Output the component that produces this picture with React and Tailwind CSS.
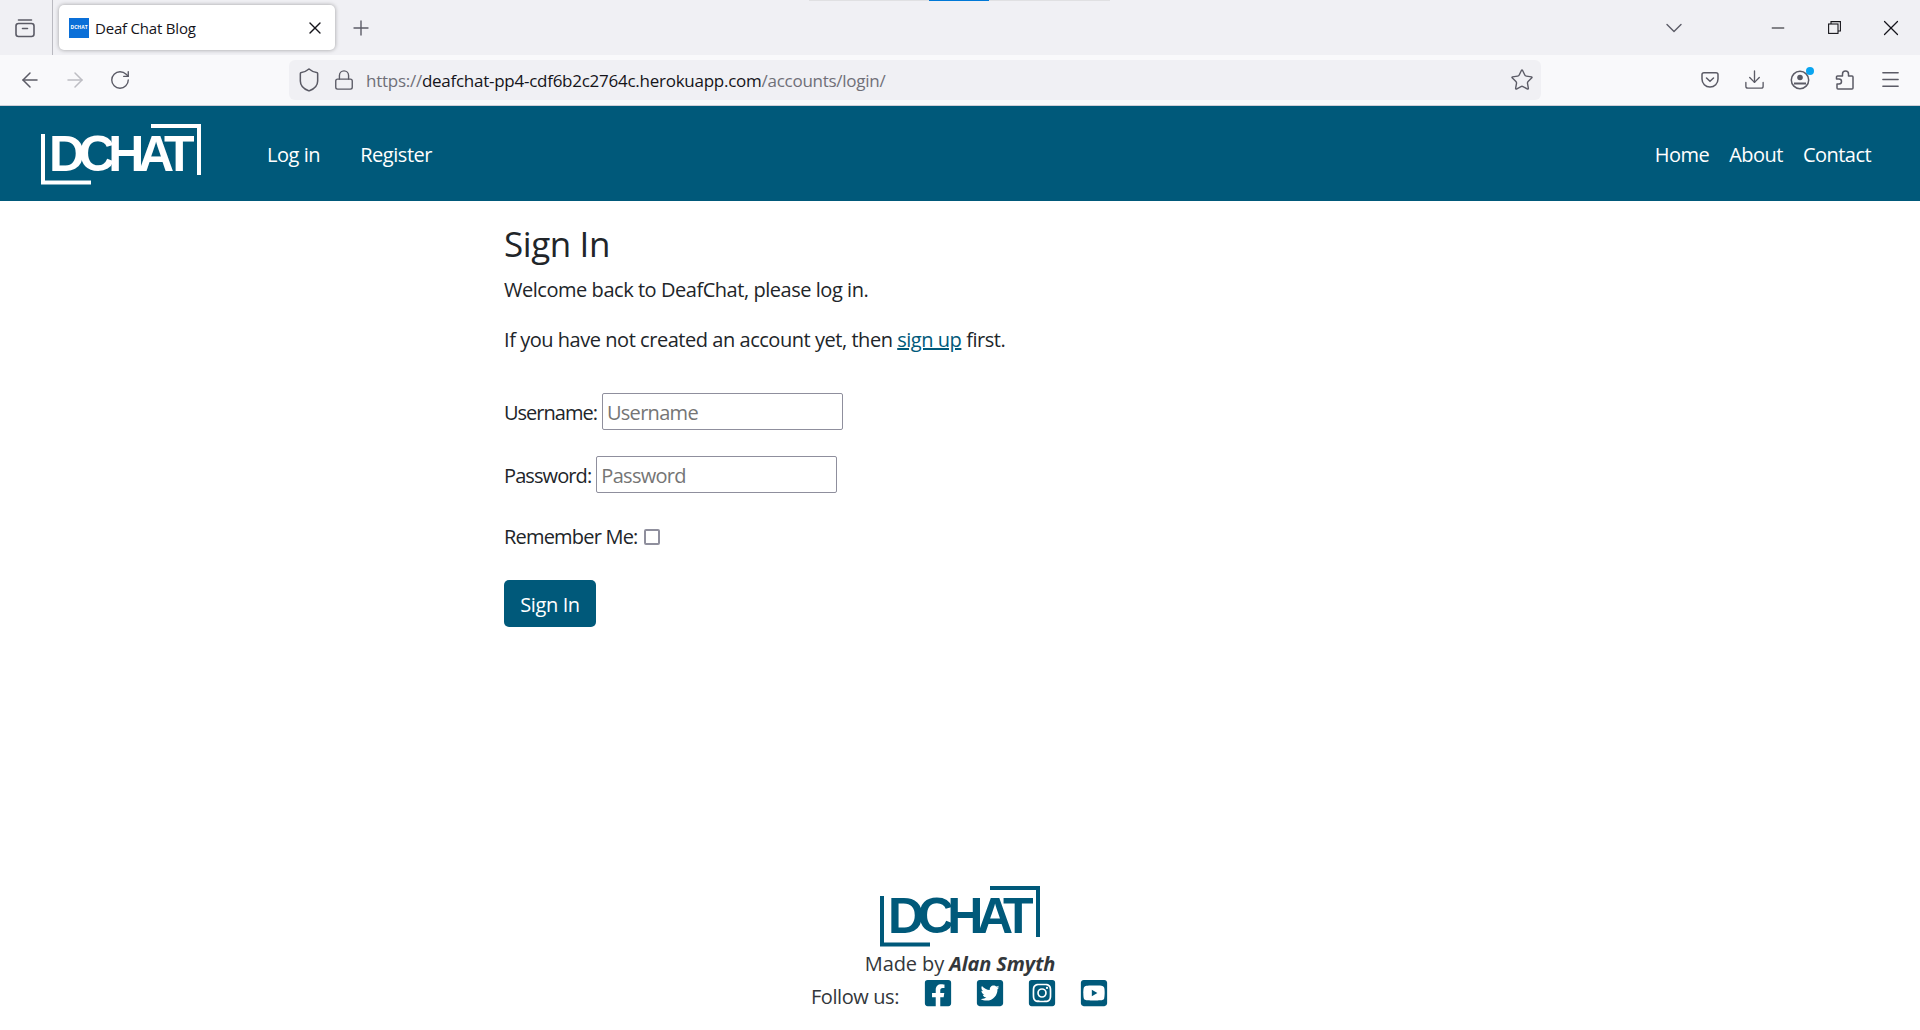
import { Plus, X, ArrowLeft, ArrowRight, RotateCw, Shield, Lock, Star, ChevronDown, Minus, Download, Menu } from "lucide-react";
import { FaFacebookSquare, FaTwitterSquare, FaInstagramSquare, FaYoutubeSquare } from "react-icons/fa";

const Logo = ({ color }) => (
    <svg width="162" height="62" viewBox="0 0 162 62" fill="none" className="block shrink-0">
        <path d="M3 11V59.500H51" stroke={color} strokeWidth="4" />
        <path d="M111 3H159V52" stroke={color} strokeWidth="4" />
        <text x="9" y="48" fill={color} fontFamily="Liberation Sans, Arial, sans-serif" fontWeight="700" fontSize="50" textLength="145" lengthAdjust="spacing">DCHAT</text>
    </svg>
);

function Chrome() {
    return (
        <div className="relative font-['Open_Sans',sans-serif] text-[#15141a]">
            {/* loading line */}
            <div className="absolute left-[809px] top-0 h-px w-[301px] bg-[#e0e0e2]">
                <div className="ml-[120px] h-px w-[60px] bg-[#0078d7]" />
            </div>

            {/* tab strip */}
            <div className="flex h-[55px] items-center bg-[#f0f0f4]">
                <div className="flex h-full w-[53px] items-center justify-center border-r border-[#b9b9c0] pr-[3px]">
                    <svg width="20" height="20" viewBox="0 0 20 20" fill="none" stroke="#5b5b66" strokeWidth="1.6">
                        <rect x="1" y="5.500" width="18" height="13" rx="2.500" />
                        <path d="M3.500 2H16.500M7.500 10.500H12.500" strokeLinecap="round" />
                    </svg>
                </div>
                <div className="ml-[6px] flex h-[45px] w-[276px] items-center rounded-[5px] bg-white pl-[10px] shadow-[0_0_4px_rgba(0,0,0,0.35)]">
                    <div className="flex h-5 w-5 items-center justify-center bg-[#0a6fd8] text-[5px] font-bold text-white">DCHAT</div>
                    <span className="ml-[6px] mt-px text-[15px] tracking-[-0.2px]">Deaf Chat Blog</span>
                    <X size={20} strokeWidth={1.6} className="ml-[109px]" />
                </div>
                <Plus size={24} strokeWidth={1.4} className="ml-[14px] text-[#5b5b66]" />
                <div className="ml-auto flex items-center">
                    <ChevronDown size={28} strokeWidth={1.2} className="text-[#5b5b66]" />
                    <Minus size={20} strokeWidth={1.2} className="ml-[80px]" />
                    <svg width="13" height="13" viewBox="0 0 13 13" fill="none" stroke="#15141a" strokeWidth="1.100" className="ml-[40px]">
                        <rect x="0.600" y="3" width="9.400" height="9.400" />
                        <path d="M3 3V0.600H12.400V10H10" />
                    </svg>
                    <X size={26} strokeWidth={1.1} className="ml-[37px] mr-4" />
                </div>
            </div>

            {/* toolbar */}
            <div className="flex h-[51px] items-center border-b border-[#cfcfd8] bg-[#f9f9fb] pb-px text-[#5b5b66]">
                <ArrowLeft size={24} strokeWidth={1.5} className="ml-[18px]" />
                <ArrowRight size={24} strokeWidth={1.5} className="ml-[21px] text-[#bdbdc3]" />
                <RotateCw size={22} strokeWidth={1.5} className="ml-[22px]" />
                <div className="ml-[158px] flex h-10 w-[1252px] items-center rounded-md bg-[#f0f0f4] pl-[7px] pr-[7px]">
                    <Shield size={26} strokeWidth={1.4} />
                    <Lock size={22} strokeWidth={1.5} className="ml-[11px]" />
                    <span className="ml-[11px] mt-[3px] text-[17px] tracking-[-0.26px] text-[#6f6f78]">
                        https://<span className="text-[#15141a]">deafchat-pp4-cdf6b2c2764c.herokuapp.com</span>/accounts/login/
                    </span>
                    <Star size={24} strokeWidth={1.4} className="ml-auto" />
                </div>
                <svg width="18" height="18" viewBox="0 0 18 18" fill="none" stroke="#5b5b66" strokeWidth="1.500" className="ml-[160px]">
                    <path d="M1 3.500C1 2.400 1.900 1.700 3 1.700H15C16.100 1.700 17 2.400 17 3.500V8C17 12.500 13.500 16 9 16C4.500 16 1 12.500 1 8V3.500Z" />
                    <path d="M5.500 7L9 10.300L12.500 7" strokeLinecap="round" />
                </svg>
                <Download size={23} strokeWidth={1.4} className="ml-6" />
                <div className="relative ml-6 h-5 w-5">
                    <svg width="20" height="20" viewBox="0 0 20 20" fill="none" stroke="#5b5b66" strokeWidth="1.500">
                        <circle cx="10" cy="10" r="8.700" />
                        <circle cx="10" cy="7.500" r="2.800" fill="#5b5b66" stroke="none" />
                        <path d="M4 13.500H16" strokeWidth="2" />
                    </svg>
                    <span className="absolute -right-[4px] -top-[3px] h-2 w-2 rounded-full bg-[#0aa5f0]" />
                </div>
                <svg width="20" height="20" viewBox="0 0 20 20" fill="none" stroke="#5b5b66" strokeWidth="1.500" strokeLinejoin="round" className="ml-[25px]">
                    <path d="M7.500 6V4a3 3 0 0 1 6 0v2h3.500a1 1 0 0 1 1 1v11a1 1 0 0 1-1 1H3a1 1 0 0 1-1-1v-4h2a2.500 2.500 0 0 0 0-5H1.500V7a1 1 0 0 1 1-1Z" />
                </svg>
                <Menu size={23} strokeWidth={1.4} className="ml-6" />
            </div>
        </div>
    );
}

function Navbar() {
    return (
        <nav className="flex h-[95px] items-center bg-[#00597a] pl-10 pr-[49px] text-[20px] tracking-[-0.45px] text-white">
            <Logo color="#ffffff" />
            <a className="ml-[65px] mt-[3px]">Log in</a>
            <a className="ml-10 mt-[3px]">Register</a>
            <a className="ml-auto mt-[3px] tracking-[-0.55px]">Home</a>
            <a className="ml-5 mt-[3px] tracking-[-0.5px]">About</a>
            <a className="ml-5 mt-[3px] tracking-[-0.55px]">Contact</a>
        </nav>
    );
}

function LoginForm() {
    return (
        <main className="mx-auto w-[912px] grow pt-[22px] text-[20px] leading-[30px] tracking-[-0.46px] text-[#212529]">
            <h1 className="mb-[10px] text-[35px] leading-[42px] tracking-[-0.4px]">Sign In</h1>
            <p className="mb-5">Welcome back to DeafChat, please log in.</p>
            <p>
                If you have not created an account yet, then <a className="text-[#00597a] underline">sign up</a> first.
            </p>
            <form className="mt-[38px]">
                <div className="flex h-[37px] items-center">
                    <label className="mt-[2px] tracking-[-1px]">Username:</label>
                    <input placeholder="Username" className="ml-[5px] h-[37px] w-[241px] rounded-[2px] border border-[#8f8f9d] bg-white px-1 pt-[2px] tracking-[-0.7px] placeholder:text-[#757575]" />
                </div>
                <div className="mt-[26px] flex h-[37px] items-center">
                    <label className="mt-[2px] tracking-[-0.9px]">Password:</label>
                    <input placeholder="Password" className="ml-[5px] h-[37px] w-[241px] rounded-[2px] border border-[#8f8f9d] bg-white px-1 pt-[2px] tracking-[-0.7px] placeholder:text-[#757575]" />
                </div>
                <div className="mt-7 flex h-[30px] items-center">
                    <label className="mt-[2px] tracking-[-0.8px]">Remember Me:</label>
                    <span className="ml-[6px] mt-px h-4 w-4 rounded-[2px] border-2 border-[#8f8f9d] bg-white" />
                </div>
                <button type="button" className="mt-[29px] h-[47px] w-[92px] rounded-[5px] bg-[#00597a] pt-[2px] tracking-[-0.4px] text-white">Sign In</button>
            </form>
        </main>
    );
}

function Footer() {
    return (
        <footer className="flex flex-col items-center pb-5 text-[20px] leading-[30px] tracking-[-0.5px] text-[#33373b]">
            <Logo color="#00597a" />
            <p className="mt-[2px] tracking-[-0.1px]">Made by <strong className="font-bold italic">Alan Smyth</strong></p>
            <div className="mb-px flex h-[30px] items-center">
                <span className="mt-[5px] tracking-[-0.4px]">Follow us:</span>
                <div className="-mt-[3px] ml-6 flex gap-[22px] text-[30px] text-[#00597a]">
                    <FaFacebookSquare />
                    <FaTwitterSquare />
                    <FaInstagramSquare />
                    <FaYoutubeSquare />
                </div>
            </div>
        </footer>
    );
}

export default function App() {
    return (
        <div className="flex h-[1030px] flex-col overflow-hidden bg-white font-['Open_Sans',sans-serif]">
            <Chrome />
            <Navbar />
            <LoginForm />
            <Footer />
        </div>
    );
}
